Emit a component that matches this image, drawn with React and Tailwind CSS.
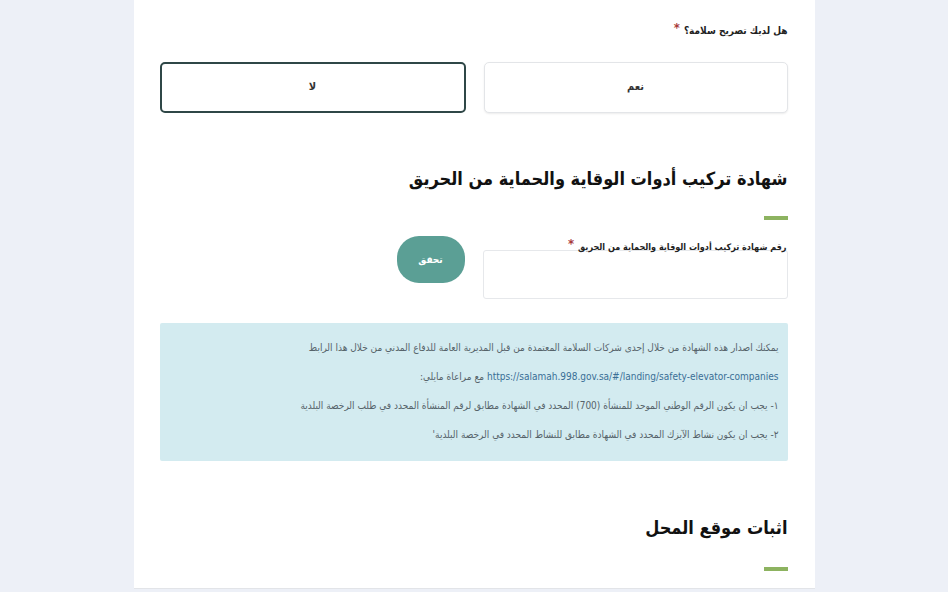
import React, { useState } from 'react';

const arabic = { fontFamily: '"DejaVu Sans Condensed", "DejaVu Sans", sans-serif' };

const Star = () => (
  <span className="text-[#a83a3a] text-[13px] align-top mr-1 relative -top-[3px]">*</span>
);

const GreenBar = () => <div className="w-[24px] h-[4px] bg-[#8db360]" />;

const App = () => {
  const [hasPermit, setHasPermit] = useState('no');
  const [certNo, setCertNo] = useState('');

  return (
    <div className="min-h-screen bg-[#edf0f7] flex justify-center" style={arabic}>
      <div dir="rtl" className="w-[681px] h-[589px] bg-white border-b border-[#e2e4e8] pr-[27px] pl-[26px] pt-[21px]">
        <div className="text-[10px] font-bold text-[#222] leading-[20px]">
          هل لديك تصريح سلامة؟
          <Star />
        </div>

        <div className="mt-[21px] flex gap-[18px]">
          <button
            onClick={() => setHasPermit('yes')}
            className={`flex-1 h-[51px] rounded-[5px] bg-white text-[11px] font-bold text-[#333] ${
              hasPermit === 'yes'
                ? 'border-2 border-[#2f4747]'
                : 'border border-[#e3e5e8] shadow-[0_1px_2px_rgba(0,0,0,0.08)]'
            }`}
          >
            نعم
          </button>
          <button
            onClick={() => setHasPermit('no')}
            className={`flex-1 h-[51px] rounded-[5px] bg-white text-[11px] font-bold text-[#333] ${
              hasPermit === 'no'
                ? 'border-2 border-[#2f4747]'
                : 'border border-[#e3e5e8] shadow-[0_1px_2px_rgba(0,0,0,0.08)]'
            }`}
          >
            لا
          </button>
        </div>

        <h2 className="mt-[46px] text-[18px] font-bold text-[#111] leading-[40px]">
          شهادة تركيب أدوات الوقاية والحماية من الحريق
        </h2>
        <div className="mt-[17px]">
          <GreenBar />
        </div>

        <div className="mt-[18px] flex gap-[18px] items-start">
          <div className="w-[305px]">
            <div className="relative z-10 text-[9px] font-bold text-[#222] leading-[18px] pr-[1px]">
              رقم شهادة تركيب أدوات الوقاية والحماية من الحريق
              <Star />
            </div>
            <input
              value={certNo}
              onChange={(e) => setCertNo(e.target.value)}
              className="-mt-[6px] w-full h-[49px] border border-[#e6e8eb] rounded-[3px] bg-white outline-none px-3 text-[12px]"
            />
          </div>
          <button className="mt-[-2px] w-[68px] h-[47px] rounded-[22px] bg-[#5b9f95] text-white text-[10px] font-bold">
            تحقق
          </button>
        </div>

        <div className="mt-[24px] bg-[#d3ebf0] rounded-[2px] pr-[9px] pl-3 pt-[10px] pb-[12px] text-[10px] text-[#56636a] leading-[29px]">
          <p>يمكنك اصدار هذه الشهادة من خلال إحدى شركات السلامة المعتمدة من قبل المديرية العامة للدفاع المدني من خلال هذا الرابط</p>
          <p>
            <a href="#" className="text-[#3a6f96]">https://salamah.998.gov.sa/#/landing/safety-elevator-companies</a>{' '}
            مع مراعاة مايلي:
          </p>
          <p>١- يجب ان يكون الرقم الوطني الموحد للمنشأة (700) المحدد في الشهادة مطابق لرقم المنشأة المحدد في طلب الرخصة البلدية</p>
          <p>٢- يجب ان يكون نشاط الآيزك المحدد في الشهادة مطابق للنشاط المحدد في الرخصة البلدية'</p>
        </div>

        <h2 className="mt-[47px] text-[18px] font-bold text-[#111] leading-[40px]">
          اثبات موقع المحل
        </h2>
        <div className="mt-[19px]">
          <GreenBar />
        </div>
      </div>
    </div>
  );
};

export default App;
